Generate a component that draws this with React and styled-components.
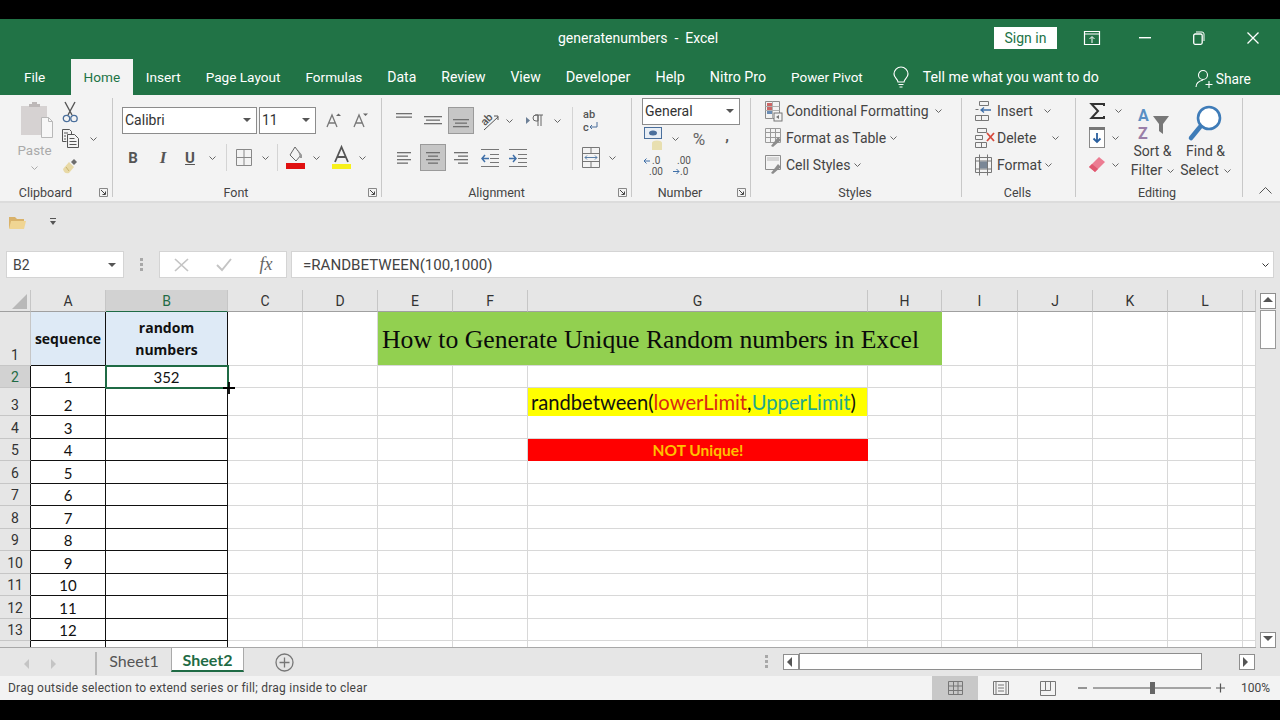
import React from 'react';
import styled, { createGlobalStyle } from 'styled-components';

const UI = `Roboto, "Liberation Sans", sans-serif`;
const CELL = `Lato, "Liberation Sans", sans-serif`;

const GlobalStyle = createGlobalStyle`
  html, body { margin: 0; padding: 0; background: #000; }
  * { box-sizing: border-box; }
  svg { overflow: visible; }
`;

const Page = styled.div`
  width: 1280px;
  height: 720px;
  padding: 19px 0 20px;
  background: #000;
  display: flex;
  flex-direction: column;
  font-family: ${UI};
  color: #444;
  overflow: hidden;
`;

/* title bar */
const TitleBar = styled.header`
  height: 40px;
  flex: none;
  background: #217346;
  display: flex;
  align-items: center;
  padding-bottom: 3px;
  color: #fff;
  font-size: 14px;
`;
const DocName = styled.div`
  margin-left: 558px;
  width: 436px;
  white-space: pre;
`;
const SignIn = styled.button`
  width: 63px;
  height: 22px;
  border: 0;
  padding: 0;
  background: #fff;
  color: #217346;
  font: 14px ${UI};
`;
const WinBtn = styled.div`
  width: ${p => p.$w}px;
  display: flex;
  justify-content: center;
`;

/* tab strip */
const TabStrip = styled.nav`
  height: 36px;
  flex: none;
  background: #217346;
  display: flex;
  padding-left: 11.5px;
  color: #fff;
`;
const Tab = styled.div`
  padding: 0 12.5px;
  display: flex;
  align-items: center;
  height: 36px;
  white-space: nowrap;
  font-size: ${p => p.$fs || 13.6}px;
  ${p => p.$active && `
    background: #f3f3f3;
    color: #217346;
    width: 62px;
    padding: 0;
    justify-content: center;
    margin: 0 0.5px 0 13px;
  `}
`;
const TellMe = styled.div`
  display: flex;
  align-items: center;
  gap: 14px;
  margin-left: 17.5px;
  width: 302px;
  font-size: 14.2px;
`;
const Share = styled.div`
  display: flex;
  align-items: center;
  gap: 3px;
  padding-top: 3px;
  font-size: 13.8px;
`;

/* ribbon */
const Ribbon = styled.section`
  height: 108px;
  flex: none;
  background: #f3f3f3;
  border-bottom: 2px solid #dcdcdc;
  padding-top: 3px;
  display: flex;
`;
const Group = styled.div`
  flex: none;
  width: ${p => p.$w}px;
  height: 99px;
  border-right: 1px solid #c8c8c8;
  display: flex;
  flex-direction: column;
`;
const GroupBody = styled.div`
  height: 87px;
  display: flex;
  padding-left: ${p => p.$pl || 0}px;
`;
const GroupLabel = styled.div`
  height: 12px;
  line-height: 16px;
  font-size: 12.5px;
  text-align: center;
  position: relative;
  padding-right: ${p => p.$pr || 0}px;
`;
const Launcher = styled.span`
  position: absolute;
  right: 4px;
  top: 3px;
  display: flex;
`;
const Stack = styled.div`
  display: flex;
  flex-direction: column;
  gap: ${p => p.$gap || 0}px;
  padding-top: ${p => p.$pt || 0}px;
  width: ${p => (p.$w ? `${p.$w}px` : 'auto')};
  margin-left: ${p => p.$ml || 0}px;
  margin-top: ${p => p.$mt || 0}px;
`;
const Row = styled.div`
  display: flex;
  align-items: center;
  height: 27px;
`;
const Slot = styled.div`
  flex: none;
  width: ${p => p.$w}px;
  margin-left: ${p => p.$ml || 0}px;
  height: ${p => (p.$active ? '27px' : 'auto')};
  padding-top: ${p => p.$pt || 0}px;
  padding-bottom: ${p => p.$pb || 0}px;
  display: flex;
  align-items: center;
  justify-content: center;
  ${p => p.$active && `background: #c6c6c6; border: 1px solid #9a9a9a;`}
`;
const RowSep = styled.div`
  flex: none;
  width: 1px;
  height: ${p => p.$h || 27}px;
  background: #d4d4d4;
`;
const ComboBox = styled.div`
  flex: none;
  width: ${p => p.$w}px;
  margin-right: ${p => p.$mr || 0}px;
  height: 27px;
  background: #fff;
  border: 1px solid #8c8c8c;
  display: flex;
  align-items: center;
  justify-content: space-between;
  padding: 0 5px 1px 2px;
  font-size: 14px;
  color: #333;
`;
const PasteCol = styled.div`
  width: 35px;
  display: flex;
  flex-direction: column;
  align-items: center;
  padding-top: 4px;
  color: #aaa;
  font-size: 13.4px;
`;
const PasteImg = styled.div`
  display: flex;
  margin-left: 5px;
`;
const PasteText = styled.div`
  margin-top: 3px;
  line-height: 18px;
`;
const ChevWrap = styled.div`
  margin-top: 6px;
  display: flex;
`;
const LinkRow = styled.div`
  height: 27px;
  display: flex;
  align-items: center;
  gap: ${p => p.$gap || 4}px;
  font-size: 14px;
  white-space: nowrap;
`;
const ChevGap = styled.span`
  display: flex;
  margin-left: ${p => p.$ml}px;
`;
const BigCol = styled.div`
  flex: none;
  width: 53px;
  display: flex;
  flex-direction: column;
  align-items: center;
  padding-top: 6px;
  font-size: 14px;
  line-height: 19px;
`;
const BigIcon = styled.div`
  height: 38px;
  display: flex;
  align-items: center;
`;
const BigLine = styled.div`
  display: flex;
  align-items: center;
  gap: 5px;
  white-space: nowrap;
`;
const Collapse = styled.div`
  flex: 1;
  height: 99px;
  display: flex;
  align-items: flex-end;
  justify-content: center;
  padding: 0 0 3px 7px;
`;
const Percent = styled.span`
  font-size: 17px;
  color: #666;
`;

/* quick access */
const QuickBar = styled.div`
  height: 37px;
  flex: none;
  background: #e6e6e6;
  display: flex;
  align-items: center;
  padding-left: 9px;
  gap: 24px;
`;

/* formula bar */
const FormulaBar = styled.div`
  height: 50px;
  flex: none;
  background: #e6e6e6;
  display: flex;
  padding: 11px 6px 12px;
`;
const FieldBox = styled.div`
  flex: none;
  height: 27px;
  background: #fff;
  border: 1px solid #d4d4d4;
  display: flex;
  align-items: center;
  width: ${p => (p.$w ? `${p.$w}px` : 'auto')};
  font-size: 14px;
  color: #444;
`;
const NameText = styled.span`
  flex: 1;
  padding-left: 6px;
`;
const FormulaText = styled.span`
  flex: 1;
  padding-left: 11px;
  font-size: 15.1px;
`;
const Grip = styled.div`
  flex: none;
  width: 35px;
  display: flex;
  align-items: center;
  justify-content: center;
`;

/* sheet */
const COLS = [['A', 75], ['B', 122], ['C', 75], ['D', 75], ['E', 75], ['F', 75], ['G', 340], ['H', 74], ['I', 76], ['J', 75], ['K', 75], ['L', 75], ['', 13]];
const ROWS = [54, 22, 28, 23, 22, 23, 22, 23, 22, 23, 22, 23, 22, 23];

const SheetArea = styled.div`
  height: 358px;
  flex: none;
  display: flex;
  background: #e6e6e6;
`;
const Sheet = styled.div`
  width: 1256px;
  height: 358px;
  position: relative;
  overflow: hidden;
  background: #fff;
  border-bottom: 1px solid #a8a8a8;
  display: grid;
  grid-template-columns: 31px ${COLS.map(c => `${c[1]}px`).join(' ')};
  grid-template-rows: 22px ${ROWS.map(r => `${r}px`).join(' ')};
  font-family: ${CELL};
  font-size: 15px;
  color: #111;
`;
const Corner = styled.div`
  background: #e6e6e6;
  border-right: 1px solid #c6c6c6;
  border-bottom: 1px solid #a0a0a0;
  display: flex;
  align-items: flex-end;
  justify-content: flex-end;
  padding: 0 3px 2px 0;
`;
const ColHead = styled.div`
  background: ${p => (p.$on ? '#d2d2d2' : '#e6e6e6')};
  color: ${p => (p.$on ? '#1f6b45' : '#333')};
  border-right: 1px solid #c6c6c6;
  border-bottom: 1px solid ${p => (p.$on ? '#1f6b45' : '#a0a0a0')};
  font: 14px ${UI};
  display: flex;
  align-items: center;
  justify-content: center;
`;
const RowHead = styled.div`
  background: ${p => (p.$on ? '#d2d2d2' : '#e6e6e6')};
  color: ${p => (p.$on ? '#1f6b45' : '#333')};
  border-bottom: 1px solid #c6c6c6;
  border-right: 1px solid ${p => (p.$dark ? '#111' : '#c6c6c6')};
  font: 14px ${UI};
  display: flex;
  align-items: flex-end;
  justify-content: center;
  line-height: 20px;
`;
const Cell = styled.div`
  background: ${p => p.$bg || '#fff'};
  border-right: 1px solid ${p => (p.$dark ? '#111' : '#d8d8d8')};
  border-bottom: 1px solid ${p => (p.$dark ? '#111' : '#d8d8d8')};
  display: flex;
  align-items: flex-end;
  justify-content: center;
  line-height: 20px;
  text-align: center;
  ${p => p.$selected && `
    outline: 2px solid #1f6b45;
    outline-offset: -1px;
    position: relative;
    z-index: 1;
  `}
`;
const HeadCell = styled.div`
  background: #deeaf6;
  border-right: 1px solid #111;
  border-bottom: 1px solid #111;
  display: flex;
  align-items: center;
  justify-content: center;
  text-align: center;
  font: 700 14px/22px "Open Sans", sans-serif;
  white-space: nowrap;
`;
const TitleCell = styled.div`
  grid-column: span 4;
  background: #92d050;
  border-bottom: 1px solid #d8d8d8;
  display: flex;
  align-items: center;
  padding: 2px 0 0 4px;
  font: 25.7px "Liberation Serif", serif;
  color: #0a0a0a;
  white-space: nowrap;
`;
const FormulaCell = styled.div`
  background: #ffff00;
  border-right: 1px solid #d8d8d8;
  display: flex;
  align-items: center;
  padding-left: 3px;
  font-size: 20.2px;
  white-space: nowrap;
`;
const Part = styled.span`
  color: ${p => p.$c};
`;
const AlertCell = styled.div`
  background: #ff0000;
  display: flex;
  align-items: center;
  justify-content: center;
  font-weight: 700;
  font-size: 15.5px;
  color: #ffc000;
`;
const FillCursor = styled.div`
  position: absolute;
  left: 222px;
  top: 91px;
  z-index: 2;
  display: flex;
`;

const VScroll = styled.div`
  flex: 1;
  display: flex;
  flex-direction: column;
  align-items: center;
  padding-top: 3px;
`;
const ScrollBtn = styled.div`
  flex: none;
  width: ${p => p.$w || 16}px;
  height: ${p => p.$h || 16}px;
  background: #fff;
  border: 1px solid #8e8e8e;
  display: flex;
  align-items: center;
  justify-content: center;
`;
const VThumb = styled.div`
  width: 16px;
  height: 39px;
  background: #fff;
  border: 1px solid #9a9a9a;
  margin-top: 1px;
`;
const VTrack = styled.div`
  flex: 1;
`;

/* sheet tabs */
const TabsBar = styled.div`
  height: 28px;
  flex: none;
  background: #e6e6e6;
  display: flex;
  align-items: flex-start;
`;
const NavArrows = styled.div`
  width: 97px;
  height: 23px;
  display: flex;
  align-items: center;
  padding-left: 23px;
  gap: 17px;
  border-right: 2px solid #b8b8b8;
  margin-top: 4px;
`;
const SheetTab = styled.div`
  width: ${p => p.$w}px;
  height: 24px;
  display: flex;
  align-items: center;
  justify-content: center;
  font: ${p => (p.$active ? 700 : 400)} 16px ${CELL};
  color: ${p => (p.$active ? '#1f6b45' : '#555')};
  ${p => p.$active && `
    background: #fff;
    border-bottom: 2px solid #1f6b45;
    border-left: 1px solid #aaa;
    border-right: 1px solid #aaa;
  `}
`;
const AddSheet = styled.div`
  width: 82px;
  height: 28px;
  padding-left: 31px;
  display: flex;
  align-items: center;
`;
const HScroll = styled.div`
  display: flex;
  align-items: center;
  height: 28px;
  margin-left: 440px;
  padding-bottom: 1px;
`;
const Dots = styled.div`
  width: 33px;
  display: flex;
  justify-content: center;
  margin-left: -16px;
`;
const HThumb = styled.div`
  width: 403px;
  height: 17px;
  background: #fff;
  border: 1px solid #8e8e8e;
`;
const HTrack = styled.div`
  width: 37px;
`;

/* status bar */
const StatusBar = styled.footer`
  flex: 1;
  background: #f3f3f3;
  display: flex;
  align-items: center;
  padding-left: 8px;
  font-size: 12px;
  letter-spacing: 0.23px;
  color: #444;
`;
const StatusText = styled.div`
  width: 924px;
`;
const ViewBtn = styled.div`
  width: ${p => p.$w}px;
  height: 24px;
  display: flex;
  align-items: center;
  justify-content: center;
  background: ${p => (p.$active ? '#c8c8c8' : 'transparent')};
`;
const ZoomBar = styled.div`
  display: flex;
  align-items: center;
  margin-left: 7px;
`;
const ZoomPct = styled.div`
  margin-left: 16px;
  letter-spacing: 0;
`;

/* icons */
const Chev = ({ c = '#666' }) => (
  <svg width="7" height="4" viewBox="0 0 7 4"><path d="M.5.5l3 3 3-3" fill="none" stroke={c} /></svg>
);
const Tri = () => (
  <svg width="8" height="4" viewBox="0 0 8 4"><path d="M0 0h8L4 4z" fill="#555" /></svg>
);
const LauncherIcon = () => (
  <svg width="9" height="9" viewBox="0 0 9 9"><path d="M.5 8.5v-8h8v8z" fill="none" stroke="#888" /><path d="M2 2l4 4M6.5 3.5v3h-3" fill="none" stroke="#444" /></svg>
);
const PasteIcon = () => (
  <svg width="33" height="37" viewBox="0 0 33 37">
    <rect x="0" y="4" width="26" height="29" fill="#d6d2d2" />
    <path d="M8 4V2h3V0h5v2h3v3H8z" fill="#bdb8b8" />
    <path d="M20.5 15.5h7l4 4v16h-11z" fill="#f7f7f7" stroke="#b8b8b8" />
    <path d="M27.5 15.500v4h4" fill="none" stroke="#b8b8b8" />
  </svg>
);
const CutIcon = () => (
  <svg width="17" height="22" viewBox="0 0 17 22">
    <path d="M3 1l7 13M13 1L6 14" stroke="#555" strokeWidth="1.4" fill="none" />
    <circle cx="4.5" cy="17.5" r="3.2" fill="none" stroke="#4a6f9c" strokeWidth="1.3" />
    <circle cx="12" cy="17.5" r="3.2" fill="none" stroke="#4a6f9c" strokeWidth="1.3" />
  </svg>
);
const CopyIcon = () => (
  <svg width="17" height="19" viewBox="0 0 17 19" fill="none" stroke="#555">
    <path d="M.5.5h7l2 2v3M.5.5v12h4" />
    <path d="M5.5 5.5h7l4 4v9h-11z" fill="#f3f3f3" />
    <path d="M7.500 9.5h5M7.500 12.5h7M7.500 15.5h7M2 4h4M2 7h2M2 10h2" />
  </svg>
);
const PainterIcon = () => (
  <svg width="17" height="16" viewBox="0 0 17 16">
    <path d="M1 11l6-7 5 5-5 6c-3 1-5 0-6-4z" fill="#e8d9a6" />
    <path d="M9 4l3-3 3 3-3 3z" fill="#6d6d6d" />
    <path d="M4 9l3 4" stroke="#c9b36d" />
  </svg>
);
const GrowA = ({ up }) => (
  <svg width="16" height="16" viewBox="0 0 16 16">
    <path d="M1 14L6 2l5 12M3 10h6" fill="none" stroke="#777" strokeWidth="1.3" />
    <path d={up ? 'M10 3l2.5-2.5L15 3z' : 'M10 .5h5L12.5 3z'} fill="#666" />
  </svg>
);
const BoldT = styled.span`
  font: 700 15px ${UI};
  color: #555;
`;
const ItalT = styled(BoldT)`
  font-style: italic;
  font-family: "Liberation Serif", serif;
  font-size: 17px;
`;
const UnderT = styled(BoldT)`
  text-decoration: underline;
`;
const BorderIcon = () => (
  <svg width="16" height="17" viewBox="0 0 16 17"><path d="M.5.5h15v16H.5zM8 .5v16M.5 8.5h15" fill="none" stroke="#888" /></svg>
);
const FillIcon = () => (
  <svg width="19" height="23" viewBox="0 0 19 23">
    <path d="M9 1l6 8-5 6-6-6z" fill="none" stroke="#666" />
    <path d="M12 4l4 5v3h-2z" fill="#999" />
    <rect x="0" y="17" width="19" height="6" fill="#e01010" />
  </svg>
);
const ColorA = () => (
  <svg width="19" height="23" viewBox="0 0 19 23">
    <path d="M3 16L9.5 1 16 16M5.500 11h8" fill="none" stroke="#555" strokeWidth="1.8" />
    <rect x="0" y="18" width="19" height="5" fill="#f7f01a" />
  </svg>
);
const Lines = ({ rows }) => (
  <svg width="18" height={(rows.length - 1) * 3.5 + 1.3} viewBox={`0 0 18 ${(rows.length - 1) * 3.5 + 1.3}`}>
    {rows.map(([x, w], i) => (
      <rect key={i} x={x} y={i * 3.5} width={w} height="1.3" fill="#707070" />
    ))}
  </svg>
);
const OrientIcon = () => (
  <svg width="18" height="20" viewBox="0 0 18 20">
    <text x="0" y="12" fontSize="11" fontFamily="Roboto" fontWeight="500" fill="#555" transform="rotate(-45 6 9)">ab</text>
    <path d="M3 19L17 6M13 5h4v4" fill="none" stroke="#555" />
  </svg>
);
const RtlIcon = () => (
  <svg width="18" height="13" viewBox="0 0 18 13">
    <path d="M0 3l4 3.5L0 10z" fill="#6c7f96" />
    <path d="M12 1h-2a3 3 0 000 6h2zM12 1v11M15 1v11M9 1h8" fill="none" stroke="#666" />
  </svg>
);
const WrapIcon = () => (
  <svg width="16" height="20" viewBox="0 0 16 20">
    <text x="1" y="7" fontSize="11" fontFamily="Roboto" fontWeight="500" fill="#555">ab</text>
    <text x="1" y="20" fontSize="11" fontFamily="Roboto" fontWeight="500" fill="#555">c</text>
    <path d="M15 11v5H8M10 14l-2 2 2 2" fill="none" stroke="#4a6f9c" />
  </svg>
);
const IndentIcon = ({ out }) => (
  <svg width="18" height="18" viewBox="0 0 18 18">
    <path d="M0 .5h18M9 5.5h9M9 9.5h9M9 13.5h9M0 17.5h18" stroke="#777" />
    <path d={out ? 'M8 9.500H1M4 6l-3 3.5L4 13' : 'M0 9.500h7M4 6l3 3.5L4 13'} fill="none" stroke="#3f6fa8" strokeWidth="1.5" />
  </svg>
);
const MergeIcon = () => (
  <svg width="18" height="21" viewBox="0 0 18 21" fill="none">
    <path d="M.5.5h17v20H.5zM.5 6.5h17M.5 14.5h17M9 .5v6M9 14.5v6" stroke="#777" />
    <path d="M3 10.500h12M5 8.500l-2 2 2 2M13 8.500l2 2-2 2" stroke="#5a7fa8" />
  </svg>
);
const AcctIcon = () => (
  <svg width="19" height="24" viewBox="0 0 19 24">
    <rect x="0.5" y="0.5" width="17" height="11" fill="#e8eef5" stroke="#4a6f9c" />
    <ellipse cx="9" cy="6" rx="4" ry="2.5" fill="#4a6f9c" />
    <ellipse cx="13" cy="16" rx="5" ry="2.5" fill="#e8dfb0" />
    <rect x="8" y="16" width="10" height="7" fill="#e8dfb0" />
  </svg>
);
const DecIcon = ({ more }) => (
  <svg width="20" height="20" viewBox="0 0 20 20" fontFamily="Roboto" fontSize="10" fill="#555">
    <text x={more ? 8 : 5} y="8">{more ? '.0' : '.00'}</text>
    <text x={more ? 5 : 8} y="19">{more ? '.00' : '.0'}</text>
    <path d={more ? 'M0 5h6M2.500 2.500L0 5l2.500 2.500' : 'M1 15.500h6M4.500 13L7 15.500 4.500 18'} fill="none" stroke="#3f6fa8" />
  </svg>
);
const CondIcon = () => (
  <svg width="17" height="20" viewBox="0 0 17 20" fill="none">
    <path d="M.5.5h14v17H.5z" stroke="#8c8c8c" />
    <rect x="2" y="2" width="5" height="3" fill="#c66" />
    <rect x="2" y="6" width="5" height="3" fill="#c66" />
    <rect x="2" y="10" width="5" height="3" fill="#6a8db5" />
    <path d="M.5 5.500h14M.5 9.500h14M7.500.5v17" stroke="#b0b0b0" />
    <rect x="9" y="12" width="8" height="8" fill="#f3f3f3" stroke="#777" />
    <path d="M11 16l3-2v4z" fill="#777" />
  </svg>
);
const TableIcon = () => (
  <svg width="17" height="20" viewBox="0 0 17 20" fill="none">
    <path d="M.5.5h15v14H.5zM.5 4.500h15M.5 9.500h15M5.500.5v14M10.500.5v14" stroke="#9a9a9a" />
    <path d="M6 18l7-9 3 3-8 7z" fill="#8c8c8c" />
  </svg>
);
const StylesIcon = () => (
  <svg width="17" height="20" viewBox="0 0 17 20" fill="none">
    <path d="M.5.5h15v14H.5z" stroke="#8c8c8c" />
    <rect x="2" y="2" width="12" height="4" fill="#d5d5d5" />
    <path d="M6 18l7-9 3 3-8 7z" fill="#8c8c8c" />
  </svg>
);
const InsertIcon = () => (
  <svg width="17" height="20" viewBox="0 0 17 20" fill="none" stroke="#777">
    <path d="M4.500.5h9v4h-9zM.5 14.500h13v5H.5zM6.500 14.500v5M.5 8.500h3" />
    <path d="M16 9H6M9 6.500L6 9l3 2.500" stroke="#3f6fa8" strokeWidth="1.3" />
  </svg>
);
const DeleteIcon = () => (
  <svg width="21" height="20" viewBox="0 0 21 20" fill="none" stroke="#777">
    <path d="M2.500.5h9v4h-9zM.5 14.500h11v5H.5zM6.500 14.500v5M.5 7.500h7v4h-7z" />
    <path d="M12 5l7 8M19 5l-7 8" stroke="#d64a3c" strokeWidth="1.8" />
  </svg>
);
const FormatIcon = () => (
  <svg width="17" height="22" viewBox="0 0 17 22" fill="none" stroke="#777">
    <path d="M.5 3.500h16v15H.5zM4.500.5v21M12.500.5v21M.5 7h16M.5 15h16" />
    <rect x="5" y="7.500" width="7" height="7" fill="#7a8796" stroke="none" />
  </svg>
);
const SigmaIcon = () => (
  <svg width="15" height="16" viewBox="0 0 15 16"><path d="M14 3V1H1.500L8 8l-6.500 7H14v-2" fill="none" stroke="#333" strokeWidth="2" /></svg>
);
const DownFill = () => (
  <svg width="16" height="21" viewBox="0 0 16 21">
    <rect x=".5" y=".5" width="15" height="20" fill="#fff" stroke="#888" />
    <rect x="0" y="0" width="16" height="3" fill="#777" />
    <path d="M8 6v9M4.500 11.500L8 15l3.500-3.500" fill="none" stroke="#2a5f9e" strokeWidth="1.8" />
  </svg>
);
const EraserIcon = () => (
  <svg width="17" height="17" viewBox="0 0 17 17">
    <path d="M0 11l10-10 6 5-10 10z" fill="#ec7c92" />
    <path d="M0 11l3-3 6 5-3 3z" fill="#e0576f" />
  </svg>
);
const SortIcon = () => (
  <svg width="35" height="33" viewBox="0 0 35 33" fontFamily="Roboto" fontWeight="700" fontSize="16">
    <text x="3" y="14" fill="#5a8fc4">A</text>
    <text x="3" y="32" fill="#9a7fa8">Z</text>
    <path d="M18 9h16l-6 8v10l-4-3v-7z" fill="#777" />
  </svg>
);
const FindIcon = () => (
  <svg width="33" height="37" viewBox="0 0 33 37">
    <circle cx="20" cy="13" r="11" fill="#fff" stroke="#3f7cb8" strokeWidth="2.600" />
    <path d="M11 22L2 33" stroke="#3f7cb8" strokeWidth="4.500" strokeLinecap="round" />
  </svg>
);
const BulbIcon = () => (
  <svg width="16" height="21" viewBox="0 0 16 21" fill="none" stroke="#fff" strokeWidth="1.2">
    <path d="M5 15c0-3-4-4-4-8a7 7 0 0114 0c0 4-4 5-4 8z" />
    <path d="M5.500 17.500h5M6.500 20h3" />
  </svg>
);
const PersonIcon = () => (
  <svg width="18" height="20" viewBox="0 0 18 20" fill="none" stroke="#fff" strokeWidth="1.1">
    <circle cx="8" cy="6" r="4.500" />
    <path d="M1 18c0-4 3-6 7-7M14 12v7M10.500 15.500h7" />
  </svg>
);
const DisplayIcon = () => (
  <svg width="16" height="14" viewBox="0 0 16 14" fill="none" stroke="#fff"><path d="M.5.5h15v13H.5zM.5 3h15" strokeWidth="1.2" /><path d="M8 12V6M5.500 8L8 5.500 10.500 8" /></svg>
);
const MinIcon = () => <svg width="12" height="2" viewBox="0 0 12 2"><rect width="12" height="1.4" fill="#fff" /></svg>;
const RestoreIcon = () => (
  <svg width="12" height="14" viewBox="0 0 12 14" fill="none" stroke="#fff"><rect x=".7" y="3" width="8.500" height="10.300" rx="1.500" strokeWidth="1.3" /><path d="M3 1h6a2 2 0 012 2v7" /></svg>
);
const CloseIcon = () => (
  <svg width="12" height="12" viewBox="0 0 12 12"><path d="M.5.5l11 11M11.500.5l-11 11" stroke="#fff" strokeWidth="1.3" /></svg>
);
const FolderIcon = () => (
  <svg width="17" height="14" viewBox="0 0 17 14">
    <path d="M0 2h6l2 2h7v9H0z" fill="#d9b26a" />
    <path d="M2 6h15l-2 8H0z" fill="#f0d593" />
  </svg>
);
const QatMore = () => (
  <svg width="6" height="8" viewBox="0 0 6 8"><rect width="6" height="1" fill="#555" /><path d="M0 3h6L3 7z" fill="#555" /></svg>
);
const XGlyph = () => (
  <svg width="15" height="14" viewBox="0 0 15 14"><path d="M1 1l13 12M14 1L1 13" stroke="#c4c4c4" strokeWidth="1.7" /></svg>
);
const CheckGlyph = () => (
  <svg width="16" height="13" viewBox="0 0 16 13"><path d="M1 7l5 5 9-11" fill="none" stroke="#c4c4c4" strokeWidth="1.9" /></svg>
);
const FxText = styled.span`
  font: italic 18px "Liberation Serif", serif;
  color: #666;
`;
const GripIcon = () => (
  <svg width="3" height="13" viewBox="0 0 3 13" fill="#a8a8a8"><rect width="3" height="3" /><rect y="5" width="3" height="3" /><rect y="10" width="3" height="3" /></svg>
);
const CornerTri = () => (
  <svg width="15" height="15" viewBox="0 0 15 15"><path d="M15 0v15H0z" fill="#b8b8b8" /></svg>
);
const CrossCursor = () => (
  <svg width="14" height="14" viewBox="0 0 14 14"><path d="M7 1v12M1 7h12" stroke="#000" strokeWidth="1.8" /></svg>
);
const Arrow = ({ d, c = '#555' }) => {
  const paths = { up: 'M0 6l5-5 5 5z', down: 'M0 1h10L5 6z', left: 'M6 0v10L1 5z', right: 'M1 0v10l5-5z' };
  return <svg width="10" height="10" viewBox="0 0 10 10"><path d={paths[d]} fill={c} /></svg>;
};
const PlusCircle = () => (
  <svg width="19" height="19" viewBox="0 0 19 19" fill="none" stroke="#777" strokeWidth="1.3"><circle cx="9.500" cy="9.500" r="8.500" /><path d="M9.500 4.500v10M4.500 9.500h10" /></svg>
);
const NormalView = () => (
  <svg width="15" height="14" viewBox="0 0 15 14" fill="none" stroke="#777"><path d="M.5.5h14v13H.5zM5.500.5v13M10 .5v13M.5 5h14M.5 9.500h14" /></svg>
);
const LayoutView = () => (
  <svg width="16" height="14" viewBox="0 0 16 14" fill="none" stroke="#777"><path d="M.5.5h15v13H.5zM3 .5v13M13 .5v13M5 4h6M5 7h6M5 10h6" /></svg>
);
const BreakView = () => (
  <svg width="16" height="15" viewBox="0 0 16 15" fill="none" stroke="#777"><path d="M.5.5h15v14H.5zM.5 9.500h10v-9M5.500.5v9" /></svg>
);
const ZoomSlider = () => (
  <svg width="147" height="14" viewBox="0 0 147 14">
    <path d="M0 7h9" stroke="#555" strokeWidth="1.2" />
    <path d="M15 7h118" stroke="#555" />
    <rect x="72" y="1" width="5" height="12" fill="#666" />
    <path d="M138 7h9M142.500 2.500v9" stroke="#555" strokeWidth="1.2" />
  </svg>
);

const LEFT = [[2, 14], [2, 11], [2, 14], [2, 11]];
const CENTER = [[2, 14], [4, 10], [2, 14], [4, 10]];
const RIGHT = [[2, 14], [6, 10], [2, 14], [6, 10]];

const TABS = [
  ['Insert', 13.6], ['Page Layout', 13.6], ['Formulas', 13.6], ['Data', 14], ['Review', 14], ['View', 14],
  ['Developer', 14.6], ['Help', 14.4], ['Nitro Pro', 14.2], ['Power Pivot', 13.5],
];

const SheetGrid = () => (
  <Sheet>
    <Corner><CornerTri /></Corner>
    {COLS.map(([name, w]) => (
      <ColHead key={name + w} $on={name === 'B'}>{name}</ColHead>
    ))}
    {ROWS.map((_, r) => {
      const n = r + 1;
      return (
        <React.Fragment key={n}>
          <RowHead $on={n === 2} $dark={n > 1}>{n}</RowHead>
          {COLS.map(([name], c) => {
            if (n === 1 && ['F', 'G', 'H'].includes(name)) return null;
            const key = `${name}${c}`;
            if (n === 1 && name === 'E') {
              return <TitleCell key={key}>How to Generate Unique Random numbers in Excel</TitleCell>;
            }
            if (n === 3 && name === 'G') {
              return (
                <FormulaCell key={key}>
                  randbetween(<Part $c="#d92a12">lowerLimit</Part>,<Part $c="#1fa98c">UpperLimit</Part>)
                </FormulaCell>
              );
            }
            if (n === 5 && name === 'G') return <AlertCell key={key}>NOT Unique!</AlertCell>;
            if (name === 'A') {
              return n === 1
                ? <HeadCell key={key}>sequence</HeadCell>
                : <Cell key={key} $dark>{n - 1}</Cell>;
            }
            if (name === 'B') {
              if (n === 1) return <HeadCell key={key}>random<br />numbers</HeadCell>;
              return <Cell key={key} $dark $selected={n === 2}>{n === 2 ? '352' : ''}</Cell>;
            }
            return <Cell key={key} />;
          })}
        </React.Fragment>
      );
    })}
    <FillCursor><CrossCursor /></FillCursor>
  </Sheet>
);

const RibbonBar = () => (
  <Ribbon>
    <Group $w={113}>
      <GroupBody $pl={17}>
        <PasteCol>
          <PasteImg><PasteIcon /></PasteImg>
          <PasteText>Paste</PasteText>
          <ChevWrap><Chev c="#aaa" /></ChevWrap>
        </PasteCol>
        <Stack $ml={8}>
          <Row><Slot $w={21}><CutIcon /></Slot></Row>
          <Row><Slot $w={21}><CopyIcon /></Slot><Slot $w={24}><Chev /></Slot></Row>
          <Row><Slot $w={21}><PainterIcon /></Slot></Row>
        </Stack>
      </GroupBody>
      <GroupLabel $pr={21}>Clipboard<Launcher><LauncherIcon /></Launcher></GroupLabel>
    </Group>

    <Group $w={269}>
      <GroupBody $pl={9}>
        <Stack $pt={9} $gap={10}>
          <Row>
            <ComboBox $w={135} $mr={2}>Calibri<Tri /></ComboBox>
            <ComboBox $w={57}>11<Tri /></ComboBox>
            <Slot $w={22} $ml={7}><GrowA up /></Slot>
            <Slot $w={22} $ml={5}><GrowA /></Slot>
          </Row>
          <Row>
            <Slot $w={22}><BoldT>B</BoldT></Slot>
            <Slot $w={38}><ItalT>I</ItalT></Slot>
            <Slot $w={16}><UnderT>U</UnderT></Slot>
            <Slot $w={28}><Chev /></Slot>
            <RowSep />
            <Slot $w={33}><BorderIcon /></Slot>
            <Slot $w={10}><Chev /></Slot>
            <Slot $w={7} />
            <RowSep />
            <Slot $w={34}><FillIcon /></Slot>
            <Slot $w={8}><Chev /></Slot>
            <Slot $w={32} $ml={5}><ColorA /></Slot>
            <Slot $w={10}><Chev /></Slot>
          </Row>
        </Stack>
      </GroupBody>
      <GroupLabel $pr={22}>Font<Launcher><LauncherIcon /></Launcher></GroupLabel>
    </Group>

    <Group $w={250}>
      <GroupBody $pl={8}>
        <Stack $pt={9} $gap={10} $w={182}>
          <Row>
            <Slot $w={28} $pb={10}><Lines rows={[[1, 16], [1, 16]]} /></Slot>
            <Slot $w={30}><Lines rows={[[0, 18], [2, 14], [0, 18]]} /></Slot>
            <Slot $w={26} $active $pt={6}><Lines rows={[[1, 16], [3, 12], [1, 16]]} /></Slot>
            <Slot $w={32}><OrientIcon /></Slot>
            <Slot $w={6}><Chev /></Slot>
            <Slot $w={30} $ml={8}><RtlIcon /></Slot>
            <Slot $w={14}><Chev /></Slot>
          </Row>
          <Row>
            <Slot $w={28}><Lines rows={LEFT} /></Slot>
            <Slot $w={26} $ml={2} $active><Lines rows={CENTER} /></Slot>
            <Slot $w={30}><Lines rows={RIGHT} /></Slot>
            <Slot $w={28}><IndentIcon out /></Slot>
            <Slot $w={28}><IndentIcon /></Slot>
          </Row>
        </Stack>
        <Stack $pt={9}>
          <RowSep $h={63} />
        </Stack>
        <Stack $pt={9} $gap={10}>
          <Row><Slot $w={24} $ml={5}><WrapIcon /></Slot></Row>
          <Row><Slot $w={26} $ml={5}><MergeIcon /></Slot><Slot $w={16}><Chev /></Slot></Row>
        </Stack>
      </GroupBody>
      <GroupLabel $pr={20}>Alignment<Launcher><LauncherIcon /></Launcher></GroupLabel>
    </Group>

    <Group $w={119}>
      <GroupBody $pl={10}>
        <Stack>
          <Row><ComboBox $w={98}>General<Tri /></ComboBox></Row>
          <Row>
            <Slot $w={22}><AcctIcon /></Slot>
            <Slot $w={22}><Chev /></Slot>
            <Slot $w={26}><Percent>%</Percent></Slot>
            <Slot $w={30} $pb={6}><BoldT>,</BoldT></Slot>
          </Row>
          <Row>
            <Slot $w={24}><DecIcon more /></Slot>
            <Slot $w={32}><DecIcon /></Slot>
          </Row>
        </Stack>
      </GroupBody>
      <GroupLabel $pr={22}>Number<Launcher><LauncherIcon /></Launcher></GroupLabel>
    </Group>

    <Group $w={211}>
      <GroupBody $pl={14}>
        <Stack $mt={-1}>
          <LinkRow><CondIcon />Conditional Formatting<ChevGap $ml={2}><Chev /></ChevGap></LinkRow>
          <LinkRow><TableIcon />Format as Table<Chev /></LinkRow>
          <LinkRow><StylesIcon />Cell Styles<Chev /></LinkRow>
        </Stack>
      </GroupBody>
      <GroupLabel $pr={2}>Styles</GroupLabel>
    </Group>

    <Group $w={114}>
      <GroupBody $pl={13}>
        <Stack $mt={-1}>
          <LinkRow $gap={5}><InsertIcon />Insert<ChevGap $ml={6}><Chev /></ChevGap></LinkRow>
          <LinkRow $gap={1}><DeleteIcon />Delete<ChevGap $ml={15}><Chev /></ChevGap></LinkRow>
          <LinkRow $gap={5}><FormatIcon />Format<ChevGap $ml={-2}><Chev /></ChevGap></LinkRow>
        </Stack>
      </GroupBody>
      <GroupLabel $pr={2}>Cells</GroupLabel>
    </Group>

    <Group $w={167}>
      <GroupBody $pl={10}>
        <Stack $w={40} $mt={-1}>
          <Row><Slot $w={22}><SigmaIcon /></Slot><Slot $w={20}><Chev /></Slot></Row>
          <Row><Slot $w={22}><DownFill /></Slot><Slot $w={14}><Chev /></Slot></Row>
          <Row><Slot $w={22}><EraserIcon /></Slot><Slot $w={14}><Chev /></Slot></Row>
        </Stack>
        <BigCol>
          <BigIcon><SortIcon /></BigIcon>
          <BigLine>Sort &amp;</BigLine>
          <BigLine>Filter<Chev /></BigLine>
        </BigCol>
        <BigCol>
          <BigIcon><FindIcon /></BigIcon>
          <BigLine>Find &amp;</BigLine>
          <BigLine>Select<Chev /></BigLine>
        </BigCol>
      </GroupBody>
      <GroupLabel $pr={4}>Editing</GroupLabel>
    </Group>

    <Collapse>
      <svg width="13" height="7" viewBox="0 0 13 7"><path d="M.5 6.500l6-6 6 6" fill="none" stroke="#555" /></svg>
    </Collapse>
  </Ribbon>
);

export default function App() {
  return (
    <Page>
      <GlobalStyle />
      <TitleBar>
        <DocName>generatenumbers  -  Excel</DocName>
        <SignIn>Sign in</SignIn>
        <WinBtn $w={70}><DisplayIcon /></WinBtn>
        <WinBtn $w={36}><MinIcon /></WinBtn>
        <WinBtn $w={72}><RestoreIcon /></WinBtn>
        <WinBtn $w={36}><CloseIcon /></WinBtn>
      </TitleBar>
      <TabStrip>
        <Tab>File</Tab>
        <Tab $active>Home</Tab>
        {TABS.map(([t, fs]) => (
          <Tab key={t} $fs={fs}>{t}</Tab>
        ))}
        <TellMe><BulbIcon />Tell me what you want to do</TellMe>
        <Share><PersonIcon />Share</Share>
      </TabStrip>
      <RibbonBar />
      <QuickBar><FolderIcon /><QatMore /></QuickBar>
      <FormulaBar>
        <FieldBox $w={118}><NameText>B2</NameText><Slot $w={22}><Tri /></Slot></FieldBox>
        <Grip><GripIcon /></Grip>
        <FieldBox $w={128}>
          <Slot $w={42}><XGlyph /></Slot>
          <Slot $w={44}><CheckGlyph /></Slot>
          <Slot $w={40}><FxText>fx</FxText></Slot>
        </FieldBox>
        <Slot $w={4} />
        <FieldBox $w={983}>
          <FormulaText>=RANDBETWEEN(100,1000)</FormulaText>
          <Slot $w={16}><Chev c="#333" /></Slot>
        </FieldBox>
      </FormulaBar>
      <SheetArea>
        <SheetGrid />
        <VScroll>
          <ScrollBtn><Arrow d="up" /></ScrollBtn>
          <VThumb />
          <VTrack />
          <ScrollBtn><Arrow d="down" /></ScrollBtn>
        </VScroll>
      </SheetArea>
      <TabsBar>
        <NavArrows><Arrow d="left" c="#c4c4c4" /><Arrow d="right" c="#c4c4c4" /></NavArrows>
        <SheetTab $w={74}>Sheet1</SheetTab>
        <SheetTab $w={73} $active>Sheet2</SheetTab>
        <AddSheet><PlusCircle /></AddSheet>
        <HScroll>
          <Dots><GripIcon /></Dots>
          <ScrollBtn><Arrow d="left" /></ScrollBtn>
          <HThumb />
          <HTrack />
          <ScrollBtn><Arrow d="right" /></ScrollBtn>
        </HScroll>
      </TabsBar>
      <StatusBar>
        <StatusText>Drag outside selection to extend series or fill; drag inside to clear</StatusText>
        <ViewBtn $w={46} $active><NormalView /></ViewBtn>
        <ViewBtn $w={46}><LayoutView /></ViewBtn>
        <ViewBtn $w={47}><BreakView /></ViewBtn>
        <ZoomBar><ZoomSlider /></ZoomBar>
        <ZoomPct>100%</ZoomPct>
      </StatusBar>
    </Page>
  );
}
